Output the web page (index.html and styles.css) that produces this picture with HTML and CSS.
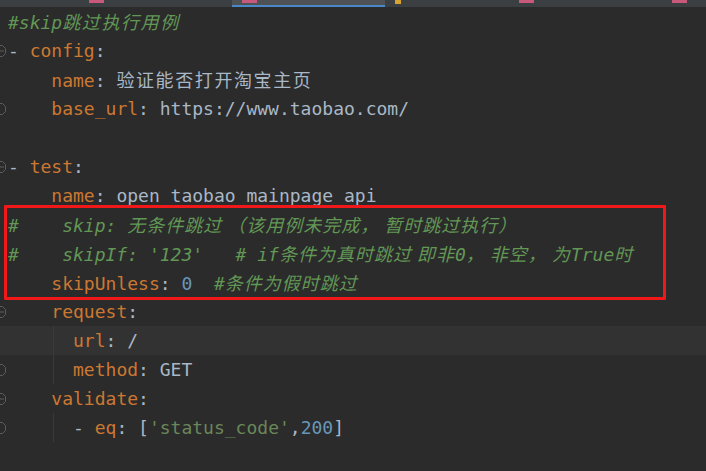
FILE: index.html
```html
<!DOCTYPE html>
<html lang="zh-CN">
<head>
<meta charset="UTF-8">
<meta name="viewport" content="width=device-width, initial-scale=1.0">
<title>skip.yml</title>
<link rel="stylesheet" href="styles.css">
</head>
<body>
  <div class="tabbar">
    <div class="tab first"></div>
    <div class="tab"><span class="tab-icon"></span></div>
    <div class="tab active"><span class="tab-icon"></span></div>
    <div class="tab short"><span class="tab-icon yellow"></span></div>
    <div class="tab"><span class="tab-icon"></span></div>
    <div class="tab"><span class="tab-icon"></span></div>
  </div>

  <div class="editor">
    <div class="line"><span class="gut"></span><span class="cm">#skip<span class="cjk wide">跳过执行用例</span></span></div>
    <div class="line"><span class="gut"><svg class="fold" viewBox="0 0 8 12"><path d="M0.5 0.5h4l3 3v5l-3 3h-4z"/><path d="M2 6h4"/></svg></span><span class="val">- </span><span class="key">config</span><span class="val">:</span></div>
    <div class="line"><span class="gut"></span>    <span class="key">name</span><span class="val">: <span class="cjk wide">验证能否打开淘宝主页</span></span></div>
    <div class="line"><span class="gut"><svg class="fold" viewBox="0 0 8 12"><path d="M0.5 0.5h4l3 3v5l-3 3h-4z"/></svg></span>    <span class="key">base_url</span><span class="val">: https://www.taobao.com/</span></div>
    <div class="line"></div>
    <div class="line"><span class="gut"><svg class="fold" viewBox="0 0 8 12"><path d="M0.5 0.5h4l3 3v5l-3 3h-4z"/><path d="M2 6h4"/></svg></span><span class="val">- </span><span class="key">test</span><span class="val">:</span></div>
    <div class="line"><span class="gut"></span>    <span class="key">name</span><span class="val">: open taobao mainpage api</span></div>
    <div class="line"><span class="gut"></span><span class="cm">#    skip: <span class="cjk">无条件跳过 （该用例未完成， 暂时跳过执行）</span></span></div>
    <div class="line"><span class="gut"></span><span class="cm">#    skipIf: '123'   # if<span class="cjk">条件为真时跳过 即非</span>0<span class="cjk">， 非空， 为</span>True<span class="cjk">时</span></span></div>
    <div class="line"><span class="gut"></span>    <span class="key">skipUnless</span><span class="val">: </span><span class="num">0</span>  <span class="cm">#<span class="cjk">条件为假时跳过</span></span></div>
    <div class="line"><span class="gut"><svg class="fold" viewBox="0 0 8 12"><path d="M0.5 0.5h4l3 3v5l-3 3h-4z"/><path d="M2 6h4"/></svg></span>    <span class="key">request</span><span class="val">:</span></div>
    <div class="line current guide"><span class="gut"></span>      <span class="key">url</span><span class="val">: /</span></div>
    <div class="line guide"><span class="gut"><svg class="fold" viewBox="0 0 8 12"><path d="M0.5 0.5h4l3 3v5l-3 3h-4z"/></svg></span>      <span class="key">method</span><span class="val">: GET</span></div>
    <div class="line"><span class="gut"><svg class="fold" viewBox="0 0 8 12"><path d="M0.5 0.5h4l3 3v5l-3 3h-4z"/><path d="M2 6h4"/></svg></span>    <span class="key">validate</span><span class="val">:</span></div>
    <div class="line guide"><span class="gut"><svg class="fold" viewBox="0 0 8 12"><path d="M0.5 0.5h4l3 3v5l-3 3h-4z"/></svg></span>      <span class="val">- </span><span class="key">eq</span><span class="val">: [</span><span class="str">'status_code'</span><span class="val">,</span><span class="num">200</span><span class="val">]</span></div>
    <div class="line"></div>

    <div class="highlight-box"></div>
  </div>
</body>
</html>
```

FILE: styles.css
```css
body {
  margin: 0;
  padding: 0;
  background-color: #2b2b2b;
  overflow: hidden;
}

.tabbar {
  display: flex;
  height: 7px;
  background-color: #3c3f41;
  overflow: hidden;
}

.tab {
  flex: 0 0 153px;
  position: relative;
}

.tab.first {
  flex-basis: 79px;
}

.tab.short {
  flex-basis: 124px;
}

.tab.active {
  background-color: #4e5254;
  border-bottom: 2px solid #4a88c7;
  box-sizing: border-box;
}

.tab-icon {
  position: absolute;
  left: 10px;
  top: 0;
  width: 15px;
  height: 3px;
  background-color: #c75a7a;
}

.tab-icon.yellow {
  width: 6px;
  height: 4px;
  background-color: #d9a330;
}

.editor {
  position: relative;
  font-family: "DejaVu Sans Mono", "Noto Sans CJK SC", monospace;
  font-size: 18px;
  color: #a9b7c6;
}

.line {
  position: relative;
  height: 29px;
  line-height: 29px;
  padding-left: 8px;
  white-space: pre;
}

.line.current {
  background-color: #323232;
}

/* indent guide under request / validate */
.line.guide::before {
  content: "";
  position: absolute;
  left: 53px;
  top: 0;
  bottom: 0;
  border-left: 1px solid #3a3a3a;
}

.gut {
  position: absolute;
  left: 0;
  top: 9px;
  width: 8px;
  height: 12px;
}

.fold {
  display: block;
  width: 8px;
  height: 12px;
  fill: none;
  stroke: #5c5c5c;
  stroke-width: 1;
  margin-left: -2px;
}

.key {
  color: #cc7832;
}

.val {
  color: #a9b7c6;
}

.num {
  color: #6897bb;
}

.str {
  color: #6a8759;
}

.cm {
  color: #629755;
  font-style: italic;
}

.cjk {
  font-family: "Noto Sans CJK SC", sans-serif;
  font-size: 18px;
  letter-spacing: 1px;
}

.cjk.wide {
  letter-spacing: 1.6px;
}

.highlight-box {
  position: absolute;
  left: 4px;
  top: 198px;
  width: 656px;
  height: 89px;
  border: 3px solid #f01818;
  border-radius: 1px;
}
```
